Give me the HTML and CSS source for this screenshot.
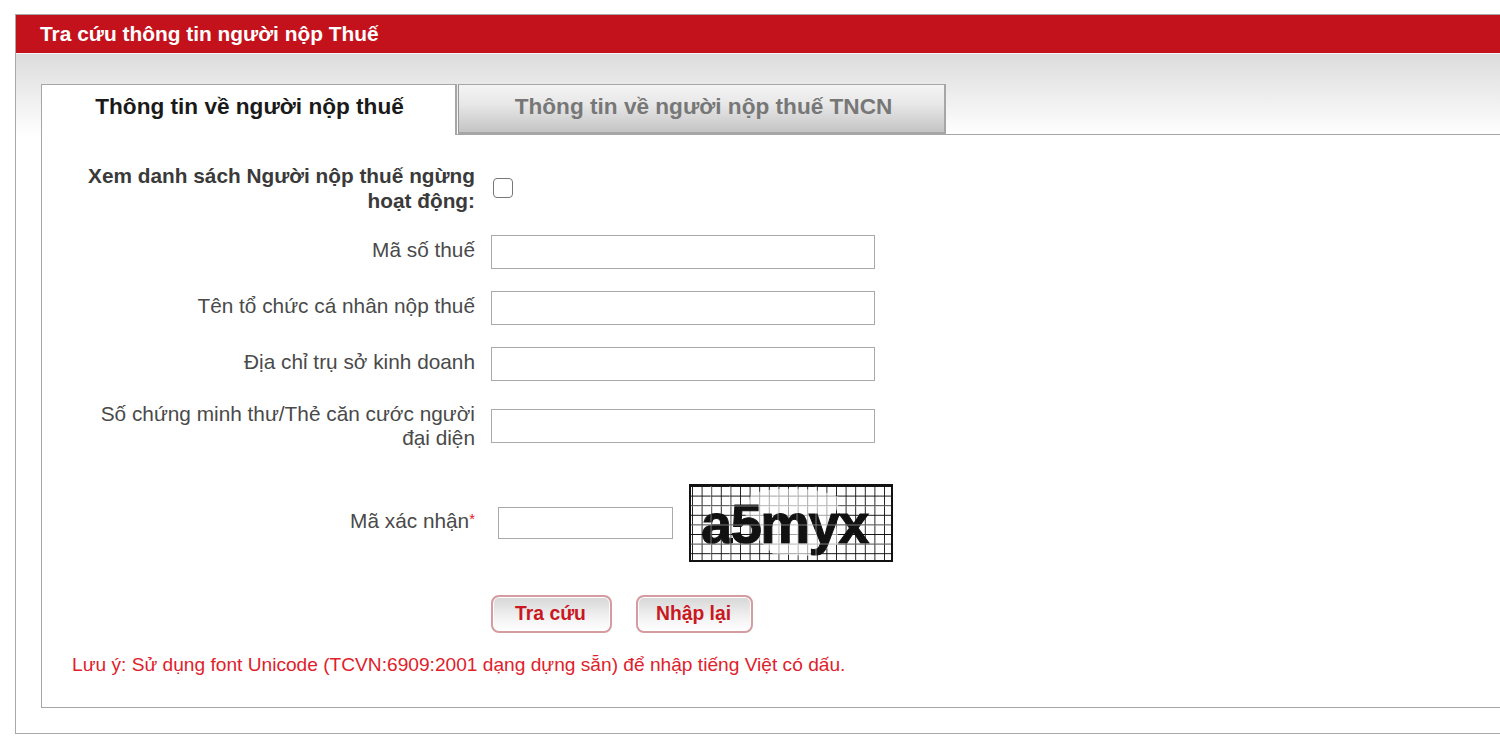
FILE: index.html
```html
<!DOCTYPE html>
<html lang="vi">
<head>
<meta charset="utf-8">
<title>Tra cứu thông tin người nộp Thuế</title>
<link rel="stylesheet" href="styles.css">
</head>
<body>
<div class="frame">
  <h1 class="title">Tra cứu thông tin người nộp Thuế</h1>
  <div class="content">
    <div class="tabs">
      <div class="tab tab-active">Thông tin về người nộp thuế</div>
      <div class="tab tab-idle">Thông tin về người nộp thuế TNCN</div>
    </div>
    <div class="panel">
      <form class="form">
        <label class="label label-strong">Xem danh sách Người nộp thuế ngừng hoạt động:</label>
        <div class="field"><span class="check"></span></div>
        <label class="label label-single">Mã số thuế</label>
        <div class="field"><input class="input" type="text"></div>
        <label class="label label-single">Tên tổ chức cá nhân nộp thuế</label>
        <div class="field"><input class="input" type="text"></div>
        <label class="label label-single">Địa chỉ trụ sở kinh doanh</label>
        <div class="field"><input class="input" type="text"></div>
        <label class="label label-wrap">Số chứng minh thư/Thẻ căn cước người đại diện</label>
        <div class="field field-up"><input class="input" type="text"></div>
      </form>
      <div class="captcha-row">
        <label class="captcha-label">Mã xác nhận<span class="req">*</span></label>
        <input class="captcha-input" type="text">
        <svg class="captcha" viewBox="0 0 204 78" width="204" height="78" aria-label="captcha">
          <defs>
            <pattern id="grid" width="9.6" height="9.6" patternUnits="userSpaceOnUse" x="3" y="2">
              <path d="M0 0H9.6M0 0V9.6" stroke="#111" stroke-width="1.8" fill="none"/>
            </pattern>
          </defs>
          <rect width="204" height="78" fill="#fff"/>
          <rect width="204" height="78" fill="url(#grid)"/>
          <path d="M62 10 C84 2 130 2 152 14 L146 30 L150 60 L118 72 L84 70 L68 54 L56 30Z" fill="#fff" opacity=".6"/>
          <text x="12" y="59" class="cap-text">a5myx</text>
          <path d="M0 22H204M0 41H204M0 60H204M89 0V78M108 0V78M127 0V78M22 0V78M41 0V78" stroke="#fff" stroke-width=".8" opacity=".55"/>
          <rect x="1" y="1" width="202" height="76" fill="none" stroke="#111" stroke-width="2"/>
        </svg>
      </div>
      <div class="actions">
        <button class="btn btn-search" type="button">Tra cứu</button>
        <button class="btn btn-reset" type="button">Nhập lại</button>
      </div>
      <p class="note">Lưu ý: Sử dụng font Unicode (TCVN:6909:2001 dạng dựng sẵn) để nhập tiếng Việt có dấu.</p>
    </div>
  </div>
</div>
</body>
</html>
```
FILE: styles.css
```css
html, body {
  margin: 0;
  padding: 0;
  height: 100%;
  overflow: hidden;
  background: #fff;
}
body {
  padding: 14px 0 0 15px;
  box-sizing: border-box;
  font-family: "Liberation Sans", Arial, sans-serif;
  color: #444;
}
.frame {
  width: 1520px;
  height: 720px;
  box-sizing: border-box;
  border: 1px solid #a8a8a8;
  border-right: 0;
}
.title {
  margin: 0;
  height: 39px;
  line-height: 38px;
  padding-left: 24px;
  background: #c4121c;
  color: #fff;
  font-size: 20.9px;
  font-weight: bold;
  box-sizing: border-box;
  border-bottom: 1px solid #f4f4f4;
}
.content {
  padding: 30px 0 0 25px;
  background: linear-gradient(#dcdcdc 0, #fff 82px);
  background-repeat: no-repeat;
}
.tabs {
  display: flex;
  height: 50px;
  box-sizing: border-box;
}
.tab {
  box-sizing: border-box;
  height: 51px;
  text-align: center;
  font-weight: bold;
  font-size: 22.6px;
  line-height: 44px;
  border: 1px solid #a6a6a6;
}
.tab-active {
  width: 416px;
  padding-left: 2px;
  background: #fff;
  color: #1a1a1a;
  border-bottom: 0;
  border-right-width: 2px;
  position: relative;
  z-index: 1;
}
.tab-idle {
  width: 488px;
  height: 50px;
  margin-left: 1px;
  padding-left: 4px;
  color: #777;
  background: linear-gradient(#f4f4f4, #e8e8e8 40%, #c4c4c4);
  border-width: 1px 2px 2px 1px;
  border-left-color: #999;
}
.panel {
  box-sizing: border-box;
  height: 574px;
  border: 1px solid #a6a6a6;
  border-right: 0;
  background: #fff;
  padding-top: 27px;
}
.form {
  display: grid;
  grid-template-columns: 399px 1fr;
  column-gap: 16px;
  row-gap: 22px;
  align-items: center;
  padding-left: 34px;
}
.label {
  font-size: 20.8px;
  line-height: 24px;
  text-align: right;
  color: #4a4a4a;
}
.label-single {
  padding-bottom: 4px;
}
.label-wrap {
  margin-top: -1px;
  padding-bottom: 2px;
}
.label-strong {
  font-weight: bold;
  color: #3a3a3a;
  line-height: 25px;
  padding: 1px 0 0;
}
.field {
  display: flex;
  align-items: center;
}
.field-up {
  margin-top: -3px;
}
.check {
  display: block;
  width: 20px;
  height: 20px;
  box-sizing: border-box;
  border: 1.5px solid #777;
  border-radius: 4px;
  margin-left: 2px;
  background: #fff;
}
.input {
  display: block;
  width: 384px;
  height: 34px;
  box-sizing: border-box;
  border: 1px solid #aaa;
  padding: 0;
  margin: 0;
  background: #fff;
}
.captcha-row {
  display: flex;
  align-items: center;
  margin-top: 32px;
}
.captcha-label {
  width: 433px;
  box-sizing: border-box;
  text-align: right;
  font-size: 20.8px;
  line-height: 24px;
  color: #4a4a4a;
  margin-top: -6px;
}
.req {
  color: #e0212b;
  font-size: 15px;
  vertical-align: 4px;
}
.captcha-input {
  display: block;
  box-sizing: border-box;
  width: 175px;
  height: 32px;
  border: 1px solid #aaa;
  margin: 0 16px 0 23px;
  padding: 0;
  background: #fff;
}
.captcha {
  display: block;
}
.cap-text {
  font-family: "Liberation Sans", Arial, sans-serif;
  font-weight: bold;
  font-size: 56px;
  letter-spacing: -1.5px;
  fill: #111;
  stroke: #111;
  stroke-width: 1px;
}
.actions {
  display: flex;
  gap: 24px;
  margin-top: 33px;
  padding-left: 449px;
}
.btn {
  display: block;
  box-sizing: border-box;
  height: 38px;
  border: 2px solid #d49ca0;
  border-radius: 8px;
  background: linear-gradient(#d6d6d6, #f2f2f2 60%, #fff);
  box-shadow: inset 0 0 0 1px #fff;
  color: #c9181f;
  font-family: "Liberation Sans", Arial, sans-serif;
  font-weight: bold;
  font-size: 19.3px;
  padding: 0 2px 0 0;
}
.btn-search { width: 121px; }
.btn-reset { width: 117px; }
.note {
  margin: 21px 0 0 30px;
  font-size: 19.15px;
  line-height: 22px;
  color: #e0212b;
}
```
